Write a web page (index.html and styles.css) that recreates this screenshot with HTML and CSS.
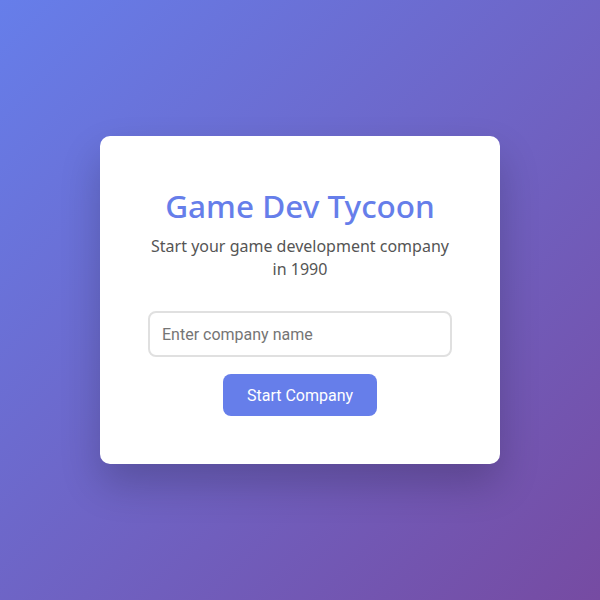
FILE: index.html
```html
<!DOCTYPE html>
<html lang="en">
<head>
<meta charset="utf-8">
<title>Game Dev Tycoon</title>
<link rel="stylesheet" href="styles.css">
</head>
<body>
<div class="page">
  <div class="card">
    <h1 class="title">Game Dev Tycoon</h1>
    <p class="subtitle">Start your game development company in 1990</p>
    <input class="name-input" type="text" placeholder="Enter company name">
    <button class="start-btn" type="button">Start Company</button>
  </div>
</div>
</body>
</html>
```

FILE: styles.css
```css
html, body {
  margin: 0;
  padding: 0;
  height: 100%;
}
body {
  font-family: "Noto Sans", sans-serif;
  background: linear-gradient(135deg, #667eea 0%, #764ba2 100%);
}
.page {
  height: 600px;
  display: flex;
  align-items: center;
  justify-content: center;
}
.card {
  width: 400px;
  box-sizing: border-box;
  padding: 48px;
  background: #fff;
  border-radius: 10px;
  box-shadow: 0 20px 40px rgba(0, 0, 0, 0.2);
  display: flex;
  flex-direction: column;
  align-items: center;
  text-align: center;
}
.title {
  margin: 0 0 7px;
  font-size: 31.5px;
  font-weight: 500;
  color: #667eea;
  line-height: 44px;
}
.subtitle {
  margin: 0 0 30px;
  font-size: 16px;
  line-height: 23px;
  color: #555;
}
.name-input {
  width: 100%;
  box-sizing: border-box;
  height: 46px;
  padding: 0 12px;
  border: 2px solid #e0e0e0;
  border-radius: 8px;
  font-family: Roboto, sans-serif;
  font-size: 16px;
  color: #333;
  outline: none;
}
.name-input::placeholder {
  color: #757575;
}
.start-btn {
  margin-top: 17px;
  height: 42px;
  padding: 0 24px;
  border: none;
  border-radius: 8px;
  background: #667eea;
  color: #fff;
  font-family: Roboto, sans-serif;
  font-size: 16px;
  cursor: pointer;
}
```
